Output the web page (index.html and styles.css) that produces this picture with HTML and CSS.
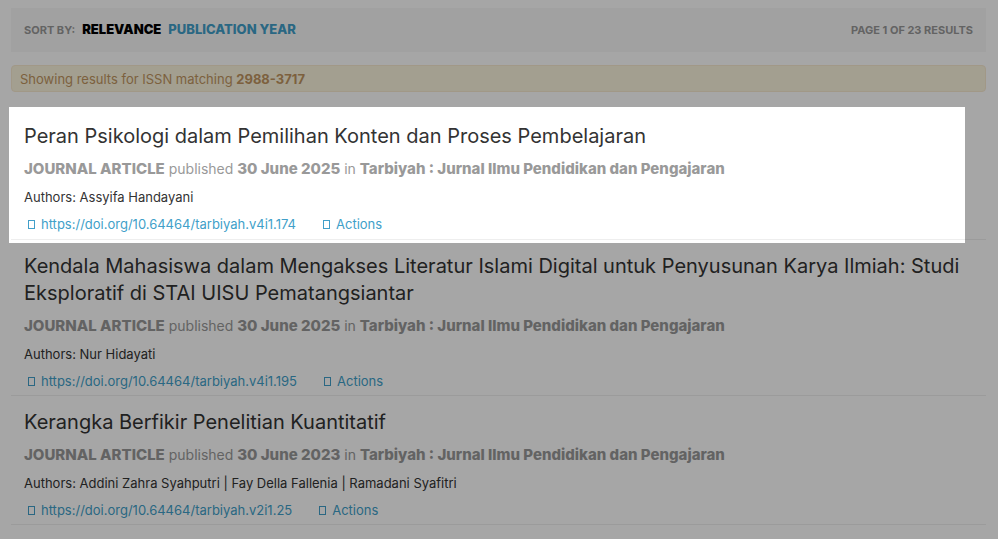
FILE: index.html
```
<!DOCTYPE html>
<html lang="en">
<head>
  <meta charset="UTF-8">
  <meta name="viewport" content="width=device-width, initial-scale=1.0">
  <title>Search results</title>
  <link rel="stylesheet" href="styles.css">
</head>
<body>
  <main class="container">
    <div class="sort-bar">
      <div class="sort-options">
        <span class="sort-label">Sort by:</span>
        <a href="#" class="sort-link active">Relevance</a>
        <a href="#" class="sort-link">Publication year</a>
      </div>
      <span class="page-count">Page 1 of 23 results</span>
    </div>

    <div class="alert">Showing results for ISSN matching <strong>2988-3717</strong></div>

    <article class="item">
      <h2 class="title">Peran Psikologi dalam Pemilihan Konten dan Proses Pembelajaran</h2>
      <p class="meta"><b>JOURNAL ARTICLE</b> published <b>30 June 2025</b> in <b>Tarbiyah : Jurnal Ilmu Pendidikan dan Pengajaran</b></p>
      <p class="authors">Authors: Assyifa Handayani</p>
      <div class="links">
        <a href="#"><svg class="icon" viewBox="0 0 8 9"><rect x="0.5" y="0.5" width="6" height="8"/></svg>https://doi.org/10.64464/tarbiyah.v4i1.174</a>
        <a href="#"><svg class="icon" viewBox="0 0 8 9"><rect x="0.5" y="0.5" width="6" height="8"/></svg>Actions</a>
      </div>
      <div class="spotlight"></div>
    </article>

    <article class="item">
      <h2 class="title">Kendala Mahasiswa dalam Mengakses Literatur Islami Digital untuk Penyusunan Karya Ilmiah: Studi Eksploratif di STAI UISU Pematangsiantar</h2>
      <p class="meta"><b>JOURNAL ARTICLE</b> published <b>30 June 2025</b> in <b>Tarbiyah : Jurnal Ilmu Pendidikan dan Pengajaran</b></p>
      <p class="authors">Authors: Nur Hidayati</p>
      <div class="links">
        <a href="#"><svg class="icon" viewBox="0 0 8 9"><rect x="0.5" y="0.5" width="6" height="8"/></svg>https://doi.org/10.64464/tarbiyah.v4i1.195</a>
        <a href="#"><svg class="icon" viewBox="0 0 8 9"><rect x="0.5" y="0.5" width="6" height="8"/></svg>Actions</a>
      </div>
    </article>

    <article class="item">
      <h2 class="title">Kerangka Berfikir Penelitian Kuantitatif</h2>
      <p class="meta"><b>JOURNAL ARTICLE</b> published <b>30 June 2023</b> in <b>Tarbiyah : Jurnal Ilmu Pendidikan dan Pengajaran</b></p>
      <p class="authors">Authors: Addini Zahra Syahputri | Fay Della Fallenia | Ramadani Syafitri</p>
      <div class="links">
        <a href="#"><svg class="icon" viewBox="0 0 8 9"><rect x="0.5" y="0.5" width="6" height="8"/></svg>https://doi.org/10.64464/tarbiyah.v2i1.25</a>
        <a href="#"><svg class="icon" viewBox="0 0 8 9"><rect x="0.5" y="0.5" width="6" height="8"/></svg>Actions</a>
      </div>
    </article>
  </main>
</body>
</html>
```
FILE: styles.css
```
* {
  box-sizing: border-box;
  margin: 0;
  padding: 0;
}

body {
  min-height: 100vh;
  font-family: Inter, sans-serif;
  font-size: 13px;
  line-height: 20px;
  color: #333;
  background: #fff;
  overflow: hidden;
}

a {
  color: #419fc9;
  text-decoration: none;
}

.container {
  padding: 8px 12px 0 11px;
}

.sort-bar {
  display: flex;
  justify-content: space-between;
  align-items: center;
  padding: 11px 13px 12px;
  background: #f7f7f7;
  text-transform: uppercase;
  font-weight: 700;
}

.sort-options {
  display: flex;
  align-items: baseline;
  gap: 7px;
}

.sort-label,
.page-count {
  font-size: 11px;
  color: #999;
}

.sort-link {
  font-weight: 800;
}

.sort-link.active {
  color: #000;
  font-weight: 900;
}

.alert {
  margin: 13px 0 19px;
  padding: 4px 8px 2px;
  border: 1px solid #f8ead0;
  border-radius: 4px;
  background: #faf4de;
  line-height: 19px;
  color: #c09460;
}

.item {
  position: relative;
  padding: 12px 13px 5px;
  border-bottom: 1px solid #eee;
}

.item + .item {
  padding: 13px 13px 4px;
}

.title {
  font-size: 20px;
  font-weight: 400;
  line-height: 27px;
}

.meta {
  margin-top: 9px;
  font-size: 14px;
  color: #999;
}

.meta b {
  font-size: 15px;
  font-weight: 800;
}

.authors {
  margin-top: 8px;
}

.links {
  display: flex;
  gap: 27px;
  margin-top: 7px;
  padding-left: 4px;
}

.icon {
  width: 8px;
  height: 9px;
  margin-right: 5px;
  fill: none;
  stroke: currentColor;
}

/* dims everything outside the highlighted result */
.spotlight {
  position: absolute;
  inset: -4px 21px -4px -2px;
  box-shadow: 0 0 0 9999px rgba(0, 0, 0, 0.35);
  pointer-events: none;
  z-index: 10;
}
```
